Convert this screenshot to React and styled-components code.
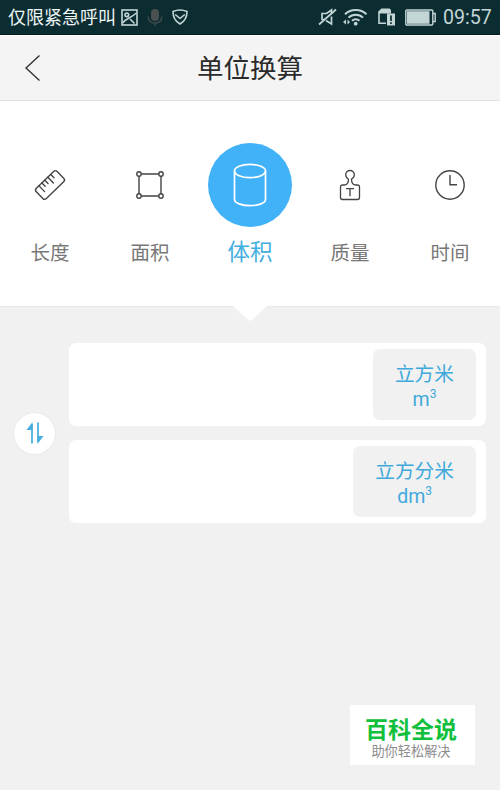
import { useState } from 'react'
import styled, { createGlobalStyle } from 'styled-components'

const GlobalStyle = createGlobalStyle`
    * {
        box-sizing: border-box;
    }
    body {
        margin: 0;
        background: #f1f1f1;
        font-family: Roboto, "Noto Sans CJK SC", sans-serif;
    }
    button {
        border: 0;
        padding: 0;
        background: none;
        font-family: inherit;
    }
    svg {
        display: block;
        flex: none;
    }
`

const Screen = styled.div`
    position: relative;
    display: flex;
    flex-direction: column;
    width: 500px;
    height: 790px;
    overflow: hidden;
    background: #f1f1f1;
`

const StatusBar = styled.div`
    display: flex;
    align-items: center;
    height: 35px;
    padding: 0 8px;
    background: #0b2d32;
    border-bottom: 1px solid #06191c;
    color: #c3d5d5;
`

const Carrier = styled.span`
    margin-right: 5px;
    padding-top: 2px;
    font-size: 18px;
    line-height: 32px;
    color: #eef5f5;
`

const StatusIcons = styled.div`
    display: flex;
    align-items: center;
    gap: ${(props) => props.$gap}px;
`

const Clock = styled.span`
    width: 49px;
    margin-left: 7px;
    padding-top: 2px;
    font-size: 19.6px;
    line-height: 34px;
    white-space: nowrap;
`

const Spacer = styled.div`
    flex: ${(props) => (props.$width ? `0 0 ${props.$width}px` : '1')};
`

const Header = styled.header`
    display: grid;
    grid-template-columns: 60px 1fr 60px;
    align-items: center;
    height: 66px;
    background: #f4f4f4;
    border-top: 1px solid #fff;
    border-bottom: 1px solid #e3e3e3;
`

const BackButton = styled.button`
    padding: 0 0 0 24px;
    color: #333;
`

const Title = styled.h1`
    margin: 0;
    padding-top: 2px;
    font-size: 26.5px;
    font-weight: 400;
    line-height: 40px;
    text-align: center;
    color: #2b2b2b;
`

const Tabs = styled.nav`
    position: relative;
    display: grid;
    grid-template-columns: repeat(5, 1fr);
    height: 206px;
    padding-top: 42px;
    background: #fff;
    border-bottom: 1px solid #e9e9e9;
`

const Tab = styled.button`
    display: flex;
    flex-direction: column;
    align-items: center;
    height: 130px;
    color: #3d3d3d;
`

const TabIcon = styled.span`
    display: flex;
    align-items: center;
    justify-content: center;
    width: 84px;
    height: 84px;
    border-radius: 50%;
    background: ${(props) => (props.$active ? '#42b2f8' : 'transparent')};
    color: ${(props) => (props.$active ? '#fff' : '#444')};
`

const TabLabel = styled.span`
    margin-top: 9px;
    font-size: ${(props) => (props.$active ? '22.5px' : '19.5px')};
    line-height: ${(props) => (props.$active ? '32px' : '36px')};
    color: ${(props) => (props.$active ? '#42aee0' : '#777')};
`

// little notch under the selected tab
const Pointer = styled.svg`
    position: absolute;
    left: 232px;
    bottom: -16px;
`

const Converter = styled.main`
    display: flex;
    align-items: center;
    gap: 14px;
    padding: 36px 14px 0 14px;
`

const SwapButton = styled.button`
    display: flex;
    align-items: center;
    justify-content: center;
    width: 41px;
    height: 41px;
    border-radius: 50%;
    background: #fff;
    box-shadow: 0 0 2px #ddd;
`

const Fields = styled.div`
    display: flex;
    flex: 1;
    flex-direction: column;
    gap: 14px;
`

const Field = styled.div`
    display: flex;
    justify-content: flex-end;
    height: 83px;
    padding: 6px 10px;
    border-radius: 7px;
    background: #fff;
`

const Unit = styled.button`
    display: flex;
    flex-direction: column;
    align-items: center;
    height: 71px;
    padding: 12px 22px 0;
    border-radius: 7px;
    background: #f1f1f1;
    color: #3fa9db;
`

const UnitName = styled.span`
    font-size: 19.7px;
    line-height: 27px;
`

const UnitSymbol = styled.span`
    font-size: 19.5px;
    line-height: 23px;
    sup {
        position: relative;
        top: -8px;
        font-size: 12px;
        line-height: 0;
        vertical-align: baseline;
    }
`

const Badge = styled.aside`
    position: absolute;
    left: 350px;
    top: 705px;
    width: 125px;
    height: 60px;
    padding-top: 11px;
    background: #fff;
    text-align: center;
`

const BadgeName = styled.div`
    padding-right: 3px;
    font-size: 23px;
    font-weight: 700;
    line-height: 29px;
    color: #10c03c;
`

const BadgeText = styled.div`
    padding-right: 3px;
    font-size: 13.2px;
    line-height: 14px;
    color: #8c8c8c;
`

const icons = {
    length: (
        <svg width="34" height="34" viewBox="0 0 34 34" fill="none" stroke="currentColor" strokeWidth="1.4" strokeLinecap="round">
            <g transform="rotate(-44 17 17)">
                <rect x="2.5" y="9.8" width="29" height="14.4" rx="2.5" />
                <path d="M8.5 10v8M12.6 10v4.5M16.7 10v4.5M20.8 10v8M24.9 10v4.5" />
            </g>
        </svg>
    ),
    area: (
        <svg width="30" height="30" viewBox="0 0 30 30" fill="none" stroke="currentColor" strokeWidth="1.4">
            <path d="M6 4h18M6 26h18M4 6v18M26 6v18" />
            <circle cx="4" cy="4" r="2.2" />
            <circle cx="26" cy="4" r="2.2" />
            <circle cx="4" cy="26" r="2.2" />
            <circle cx="26" cy="26" r="2.2" />
        </svg>
    ),
    volume: (
        <svg width="34" height="44" viewBox="0 0 34 44" fill="none" stroke="currentColor" strokeWidth="1.7">
            <ellipse cx="17" cy="8" rx="15.5" ry="6.6" />
            <path d="M1.5 8v28.5c0 3.5 7 6.2 15.5 6.2s15.5-2.7 15.5-6.2V8" />
        </svg>
    ),
    mass: (
        <svg width="22" height="32" viewBox="0 0 22 32" fill="none" stroke="currentColor" strokeWidth="1.3" strokeLinejoin="round">
            <path d="M9.5 10c0 3-1.4 5.8-4 6h-2c-1.300 0-2 .7-2 2v10.5c0 1.3.7 2 2 2h15c1.3 0 2-.7 2-2V18c0-1.3-.7-2-2-2h-2c-2.6-.2-4-3-4-6 1.7-.8 2.8-2.2 2.8-4.2 0-2.5-1.9-4.300-4.300-4.300S6.700 3.300 6.700 5.800c0 2 1.100 3.400 2.800 4.200" />
            <path d="M7 19.7h8M11 19.7v7.5" />
        </svg>
    ),
    time: (
        <svg width="32" height="32" viewBox="0 0 32 32" fill="none" stroke="currentColor" strokeWidth="1.4">
            <circle cx="16" cy="16" r="14.2" />
            <path d="M16 6v9.700h7" />
        </svg>
    ),
}

const categories = [
    { id: 'length', label: '长度' },
    { id: 'area', label: '面积' },
    { id: 'volume', label: '体积' },
    { id: 'mass', label: '质量' },
    { id: 'time', label: '时间' },
]

const PictureIcon = () => (
    <svg width="17" height="17" viewBox="0 0 17 17" fill="none" stroke="currentColor" strokeWidth="1.6">
        <rect x="1" y="1" width="15" height="15" />
        <circle cx="5.8" cy="5.8" r="1.8" />
        <path d="M1.5 14C4 10 9 9.500 15.500 4M9 10l4.500 4.500" />
    </svg>
)

const MicIcon = () => (
    <svg width="16" height="19" viewBox="0 0 16 19" fill="none" stroke="#3f494a" strokeWidth="1.5">
        <rect x="4" y="1" width="8" height="12" rx="4" fill="#4a4f50" stroke="none" />
        <path d="M1.2 8.5c0 4.2 2.8 6.5 6.8 6.5s6.8-2.3 6.8-6.5M8 15v3" />
    </svg>
)

const ShieldIcon = () => (
    <svg width="16" height="16" viewBox="0 0 16 16" fill="none" stroke="currentColor" strokeWidth="1.6" strokeLinejoin="round">
        <path d="M1 2.5C5.5.5 10.5.5 15 2.5 15 8.500 12.500 12.500 8 15 3.500 12.500 1 8.500 1 2.500z" />
        <path d="M3.2 5.500L8 9.500l4.800-4" />
    </svg>
)

const MuteIcon = () => (
    <svg width="19" height="18" viewBox="0 0 19 18" fill="none" stroke="currentColor" strokeWidth="1.7">
        <path d="M4 12V5.500h4.500L13.500 2v4M13.500 8.500V16L8 12.500M4 11.500h2" />
        <path d="M1 16.500L18 1.500" />
    </svg>
)

const WifiIcon = () => (
    <svg width="26" height="18" viewBox="0 0 26 18" fill="none" stroke="currentColor" strokeWidth="2">
        <path d="M3 6.200c6-5.600 15.500-5.600 21.500 0M6.500 9.600c4-3.800 10.500-3.800 14.500 0M10 12.800c2.200-2 5.300-2 7.500 0" />
        <circle cx="13.7" cy="15.7" r="1.900" fill="currentColor" stroke="none" />
        <path d="M4 11.500v5L1 14zM5.500 11.500v5L8 14z" fill="currentColor" stroke="none" />
    </svg>
)

// sim card with an exclamation mark on a second card in front
const SimIcon = () => (
    <svg width="17" height="18" viewBox="0 0 17 18" fill="none" stroke="currentColor" strokeWidth="1.6">
        <path d="M8 15.200H1V5" />
        <path d="M.2 5.500V3.500L3.500.500h8L13 2v3.500z" fill="currentColor" stroke="none" />
        <path d="M9 5.500h8v12H9z" fill="currentColor" stroke="none" />
        <path d="M13 7.500v5.500M13 14.300v1.700" stroke="#0b2d32" strokeWidth="1.700" />
    </svg>
)

const BatteryIcon = () => (
    <svg width="31" height="17" viewBox="0 0 31 17" fill="none" stroke="currentColor" strokeWidth="1.4">
        <rect x=".8" y="1" width="27" height="15" rx="1" />
        <rect x="2" y="2.200" width="22.500" height="12.600" fill="currentColor" stroke="none" />
        <path d="M28 4.500h2.200v8H28" />
    </svg>
)

const App = () => {
    const [active, setActive] = useState('volume')

    return (
        <>
            <GlobalStyle />
            <Screen>
                <StatusBar>
                    <Carrier>仅限紧急呼叫</Carrier>
                    <StatusIcons $gap={9}>
                        <PictureIcon />
                        <MicIcon />
                        <ShieldIcon />
                    </StatusIcons>
                    <Spacer />
                    <StatusIcons $gap={5}>
                        <MuteIcon />
                        <WifiIcon />
                    </StatusIcons>
                    <Spacer $width={10} />
                    <StatusIcons $gap={10}>
                        <SimIcon />
                        <BatteryIcon />
                    </StatusIcons>
                    <Clock>09:57</Clock>
                </StatusBar>

                <Header>
                    <BackButton aria-label="返回">
                        <svg width="17" height="28" viewBox="0 0 17 28" fill="none" stroke="currentColor" strokeWidth="1.4">
                            <path d="M15.5 1.5L2 14l13.500 12.500" />
                        </svg>
                    </BackButton>
                    <Title>单位换算</Title>
                </Header>

                <Tabs>
                    {categories.map(({ id, label }) => (
                        <Tab key={id} onClick={() => setActive(id)}>
                            <TabIcon $active={id === active}>{icons[id]}</TabIcon>
                            <TabLabel $active={id === active}>{label}</TabLabel>
                        </Tab>
                    ))}
                    <Pointer width="36" height="17" viewBox="0 0 36 17">
                        <path d="M0 0h36L20 15q-2 1.500-4 0z" fill="#fff" />
                    </Pointer>
                </Tabs>

                <Converter>
                    <SwapButton aria-label="交换">
                        <svg width="18" height="22" viewBox="0 0 18 22" fill="none" stroke="#46addd" strokeWidth="1.7">
                            <path d="M6 21.500V2M12 .500V20" />
                            <path d="M6.500 0v8H.500zM11.500 22v-8H17.500z" fill="#46addd" stroke="none" />
                        </svg>
                    </SwapButton>
                    <Fields>
                        <Field>
                            <Unit>
                                <UnitName>立方米</UnitName>
                                <UnitSymbol>m<sup>3</sup></UnitSymbol>
                            </Unit>
                        </Field>
                        <Field>
                            <Unit>
                                <UnitName>立方分米</UnitName>
                                <UnitSymbol>dm<sup>3</sup></UnitSymbol>
                            </Unit>
                        </Field>
                    </Fields>
                </Converter>

                <Badge>
                    <BadgeName>百科全说</BadgeName>
                    <BadgeText>助你轻松解决</BadgeText>
                </Badge>
            </Screen>
        </>
    )
}

export default App
